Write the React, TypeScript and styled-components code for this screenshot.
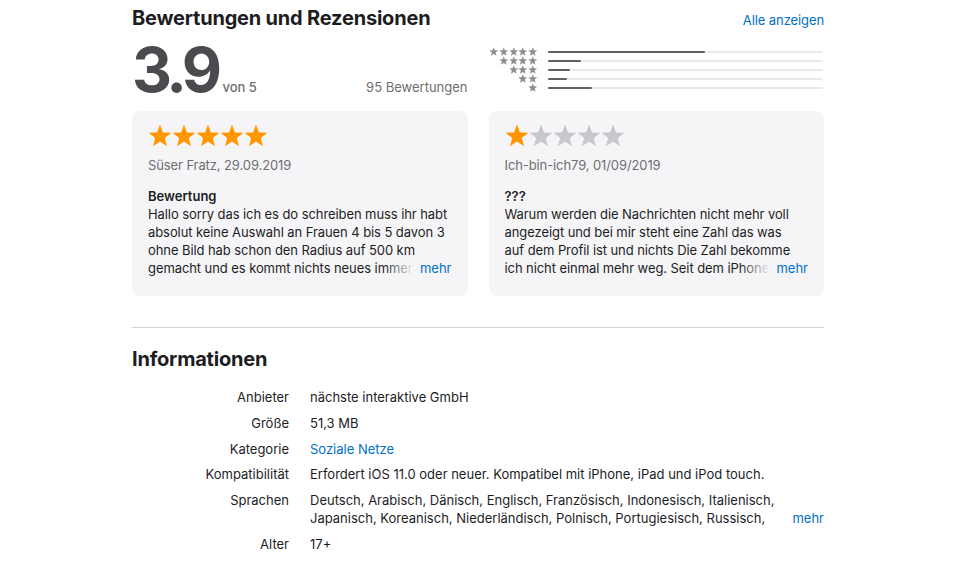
import React from "react";
import styled, { createGlobalStyle } from "styled-components";

const GlobalStyle = createGlobalStyle`
  html, body { margin: 0; padding: 0; background: #ffffff; }
  body {
    font-family: Inter, "Noto Sans", "Liberation Sans", sans-serif;
    color: #1d1d1f;
    -webkit-font-smoothing: antialiased;
  }
  * { box-sizing: border-box; }
`;

const Page = styled.main`
  width: 692px;
  margin-left: 132px;
  padding-top: 6px;
`;

const SectionHeader = styled.header`
  display: flex;
  justify-content: space-between;
  align-items: baseline;
`;

const Heading = styled.h2`
  margin: 0;
  font-size: 20px;
  line-height: 24px;
  font-weight: 700;
  letter-spacing: -0.2px;
  color: #1d1d1f;
`;

const Link = styled.a`
  font-size: 13px;
  line-height: 18px;
  color: #0070c9;
  text-decoration: none;
  letter-spacing: -0.1px;
  cursor: pointer;
`;

const Summary = styled.section`
  display: grid;
  grid-template-columns: 1fr 1fr;
  column-gap: 21px;
  margin-top: 9px;
`;

const ScoreBlock = styled.div`
  display: flex;
  align-items: baseline;
  height: 62px;
`;

const Score = styled.span`
  font-size: 62px;
  line-height: 62px;
  font-weight: 700;
  letter-spacing: -4.5px;
  color: #4a4a4f;
`;

const OutOf = styled.span`
  margin-left: 5px;
  font-size: 13px;
  font-weight: 500;
  color: #6e6e73;
`;

const Count = styled.span`
  margin-left: auto;
  font-size: 13px;
  color: #6e6e73;
`;

const Histogram = styled.div`
  display: grid;
  grid-auto-rows: 9px;
  padding-top: 8px;
`;

const HistRow = styled.div`
  display: grid;
  grid-template-columns: 49px 1fr;
  column-gap: 10px;
  align-items: center;
`;

const SmallStars = styled.div`
  display: flex;
  justify-content: flex-end;
  gap: 0.2px;
`;

const BarTrack = styled.div`
  height: 2px;
  margin-right: 1px;
  background: #e8e8ed;
  border-radius: 1px;
  display: flex;
`;

const BarFill = styled.div`
  height: 100%;
  background: #5f5f64;
  border-radius: 1px;
`;

const Reviews = styled.section`
  display: grid;
  grid-template-columns: 1fr 1fr;
  column-gap: 21px;
  margin-top: 10px;
`;

const Card = styled.article`
  background: #f5f5f7;
  border-radius: 8px;
  padding: 13px 16px 19px;
`;

const StarRow = styled.div`
  display: flex;
  height: 24px;
`;

const Author = styled.div`
  margin-top: 8px;
  font-size: 13px;
  line-height: 18px;
  color: #6e6e73;
  letter-spacing: -0.1px;
`;

const ReviewTitle = styled.h3`
  margin: 13px 0 0;
  font-size: 13px;
  line-height: 18px;
  font-weight: 600;
  color: #1d1d1f;
`;

const ReviewBody = styled.div`
  position: relative;
  max-height: 72px;
  overflow: hidden;
  font-size: 13px;
  line-height: 18px;
  color: #1d1d1f;
  letter-spacing: -0.08px;
  white-space: pre-line;
`;

const MoreLink = styled.a`
  position: absolute;
  right: 0;
  bottom: 0;
  padding-left: 36px;
  font-size: 13px;
  line-height: 18px;
  color: #0070c9;
  letter-spacing: 0;
  background: linear-gradient(to right, rgba(245, 245, 247, 0) 0, #f5f5f7 30px);
  cursor: pointer;
`;

const Divider = styled.hr`
  margin: 31px 0 19px;
  border: 0;
  height: 1px;
  background: #d2d2d7;
`;

const InfoList = styled.dl`
  display: grid;
  grid-template-columns: 157px 1fr;
  column-gap: 21px;
  row-gap: 7.8px;
  margin: 17px 0 0;
  font-size: 13px;
  line-height: 18px;
`;

const InfoLabel = styled.dt`
  text-align: right;
  color: #1d1d1f;
`;

const InfoValue = styled.dd<{ $link?: boolean }>`
  margin: 0;
  display: flex;
  justify-content: space-between;
  align-items: flex-end;
  color: ${(p) => (p.$link ? "#0070c9" : "#1d1d1f")};
`;

const ClampedText = styled.span`
  width: 478px;
  max-height: 36px;
  overflow: hidden;
`;

const InlineMore = styled.a`
  color: #0070c9;
  cursor: pointer;
`;

const STAR_POINTS =
  "12,0.5 14.94,8.45 23.41,8.79 16.76,14.05 19.05,22.21 12,17.5 4.95,22.21 7.24,14.05 0.59,8.79 9.06,8.45";

function Star({ size, color }: { size: number; color: string }) {
  return (
    <svg width={size} height={size} viewBox="0 0 24 24" aria-hidden="true">
      <polygon points={STAR_POINTS} fill={color} />
    </svg>
  );
}

const histogram = [
  { stars: 5, pct: 57 },
  { stars: 4, pct: 12 },
  { stars: 3, pct: 8 },
  { stars: 2, pct: 7 },
  { stars: 1, pct: 16 },
];

const reviews = [
  {
    rating: 5,
    author: "Süser Fratz, 29.09.2019",
    title: "Bewertung",
    body:
      "Hallo sorry das ich es do schreiben muss ihr habt absolut keine Auswahl an Frauen 4 bis 5 davon 3 ohne Bild hab schon den Radius auf 500 km gemacht und es kommt nichts neues immer die gleichen Profile",
  },
  {
    rating: 1,
    author: "Ich-bin-ich79, 01/09/2019",
    title: "???",
    body:
      "Warum werden die Nachrichten nicht mehr voll angezeigt und bei mir steht eine Zahl das was\nauf dem Profil ist und nichts Die Zahl bekomme ich nicht einmal mehr weg. Seit dem iPhone Update geht gar nichts mehr",
  },
];

export default function App() {
  return (
    <>
      <GlobalStyle />
      <Page>
        <SectionHeader>
          <Heading>Bewertungen und Rezensionen</Heading>
          <Link>Alle anzeigen</Link>
        </SectionHeader>

        <Summary>
          <ScoreBlock>
            <Score>3.9</Score>
            <OutOf>von 5</OutOf>
            <Count>95 Bewertungen</Count>
          </ScoreBlock>
          <Histogram>
            {histogram.map((row) => (
              <HistRow key={row.stars}>
                <SmallStars>
                  {Array.from({ length: row.stars }).map((_, i) => (
                    <Star key={i} size={9.5} color="#8e8e93" />
                  ))}
                </SmallStars>
                <BarTrack>
                  <BarFill style={{ width: `${row.pct}%` }} />
                </BarTrack>
              </HistRow>
            ))}
          </Histogram>
        </Summary>

        <Reviews>
          {reviews.map((r) => (
            <Card key={r.author}>
              <StarRow>
                {Array.from({ length: 5 }).map((_, i) => (
                  <Star key={i} size={24} color={i < r.rating ? "#ff9500" : "#c7c7cc"} />
                ))}
              </StarRow>
              <Author>{r.author}</Author>
              <ReviewTitle>{r.title}</ReviewTitle>
              <ReviewBody>
                {r.body}
                <MoreLink>mehr</MoreLink>
              </ReviewBody>
            </Card>
          ))}
        </Reviews>

        <Divider />

        <Heading>Informationen</Heading>
        <InfoList>
          <InfoLabel>Anbieter</InfoLabel>
          <InfoValue>nächste interaktive GmbH</InfoValue>
          <InfoLabel>Größe</InfoLabel>
          <InfoValue>51,3 MB</InfoValue>
          <InfoLabel>Kategorie</InfoLabel>
          <InfoValue $link>Soziale Netze</InfoValue>
          <InfoLabel>Kompatibilität</InfoLabel>
          <InfoValue>Erfordert iOS 11.0 oder neuer. Kompatibel mit iPhone, iPad und iPod touch.</InfoValue>
          <InfoLabel>Sprachen</InfoLabel>
          <InfoValue>
            <ClampedText>
              Deutsch, Arabisch, Dänisch, Englisch, Französisch, Indonesisch, Italienisch, Japanisch,
              Koreanisch, Niederländisch, Polnisch, Portugiesisch, Russisch, Schwedisch, Spanisch,
              Thai, Traditionelles Chinesisch, Tschechisch, Türkisch, Vereinfachtes Chinesisch
            </ClampedText>
            <InlineMore>mehr</InlineMore>
          </InfoValue>
          <InfoLabel>Alter</InfoLabel>
          <InfoValue>17+</InfoValue>
        </InfoList>
      </Page>
    </>
  );
}
